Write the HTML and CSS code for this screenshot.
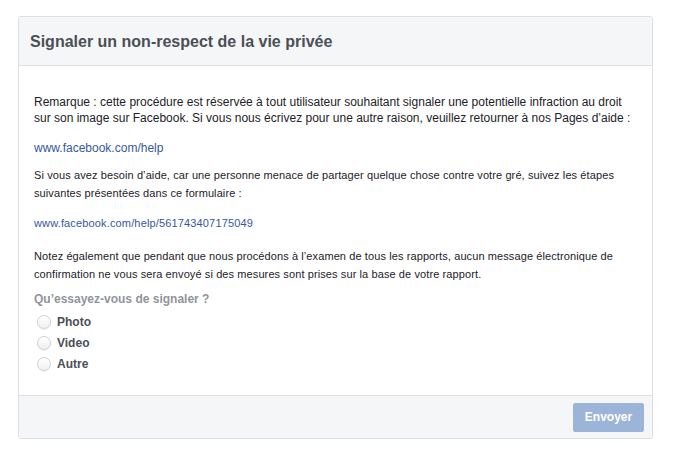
FILE: index.html
```html
<!DOCTYPE html>
<html lang="fr">
<head>
<meta charset="utf-8">
<link rel="stylesheet" href="styles.css">
</head>
<body>
<div class="card">
  <div class="card-header">
    <h1 class="title">Signaler un non-respect de la vie privée</h1>
  </div>
  <div class="card-body">
    <p class="p-first">Remarque : cette procédure est réservée à tout utilisateur souhaitant signaler une potentielle infraction au droit sur son image sur Facebook. Si vous nous écrivez pour une autre raison, veuillez retourner à nos Pages d’aide :</p>
    <p class="p-link"><a href="#">www.facebook.com/help</a></p>
    <p class="p-text">Si vous avez besoin d’aide, car une personne menace de partager quelque chose contre votre gré, suivez les étapes suivantes présentées dans ce formulaire :</p>
    <p class="p-link2"><a href="#">www.facebook.com/help/561743407175049</a></p>
    <p class="p-text">Notez également que pendant que nous procédons à l’examen de tous les rapports, aucun message électronique de confirmation ne vous sera envoyé si des mesures sont prises sur la base de votre rapport.</p>
    <div class="question">Qu’essayez-vous de signaler ?</div>
    <div class="options">
      <label class="option"><span class="radio"></span><span class="opt-label">Photo</span></label>
      <label class="option"><span class="radio"></span><span class="opt-label">Video</span></label>
      <label class="option"><span class="radio"></span><span class="opt-label">Autre</span></label>
    </div>
  </div>
  <div class="card-footer">
    <button class="btn" disabled>Envoyer</button>
  </div>
</div>
</body>
</html>
```
FILE: styles.css
```css
* { box-sizing: border-box; }
html, body { margin: 0; background: #fff; }
body {
  padding: 16px 23px 19px 18px;
  font-family: "Liberation Sans", Arial, Helvetica, sans-serif;
  font-size: 12px;
  color: #1d2129;
}
.card {
  border: 1px solid #dddfe2;
  border-radius: 3px;
  overflow: hidden;
  background: #fff;
}
.card-header {
  background: #f5f6f7;
  border-bottom: 1px solid #dddfe2;
  height: 49px;
  display: flex;
  align-items: center;
  padding: 1px 11px 0;
}
.title {
  margin: 0;
  font-size: 16px;
  font-weight: bold;
  color: #4b4f56;
}
.card-body {
  padding: 28px 15px 23px;
}
.card-body p { margin: 0; line-height: 16px; }
.p-first { margin-bottom: 14px !important; }
.p-link { margin-bottom: 10px !important; }
.p-text {
  font-size: 11px;
  letter-spacing: 0.1px;
  line-height: 18px !important;
}
.p-link2 {
  font-size: 11px;
  letter-spacing: 0.15px;
  margin: 13px 0 16px !important;
}
a { color: #365899; text-decoration: none; }
.question {
  margin-top: 8px;
  font-weight: bold;
  color: #90949c;
  line-height: 16px;
}
.options {
  margin-top: 7px;
  display: flex;
  flex-direction: column;
  gap: 5px;
}
.option {
  display: flex;
  align-items: center;
  gap: 6px;
  height: 16px;
  padding-left: 3px;
}
.radio {
  width: 14px;
  height: 14px;
  border-radius: 50%;
  border: 1px solid #cfd1d5;
  background: linear-gradient(#ffffff, #eff0f2);
  box-shadow: 0 1px 1px rgba(0,0,0,0.06);
}
.opt-label {
  font-weight: bold;
  color: #4b4f56;
}
.card-footer {
  background: #f5f6f7;
  border-top: 1px solid #dddfe2;
  height: 43px;
  display: flex;
  justify-content: flex-end;
  align-items: center;
  padding: 0 8px;
}
.btn {
  font-family: inherit;
  font-size: 12px;
  font-weight: bold;
  color: #fff;
  background: #9cb4d8;
  border: 1px solid #9cb4d8;
  border-radius: 2px;
  height: 29px;
  width: 71px;
  padding: 0;
}
```
